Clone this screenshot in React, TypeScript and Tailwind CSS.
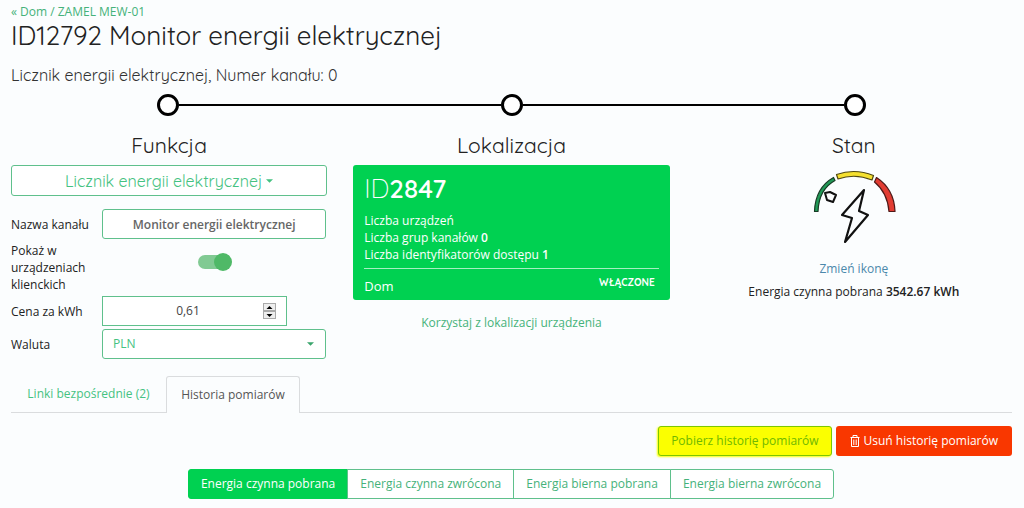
import React, { useState } from 'react';

const CHARTS = [
  'Energia czynna pobrana',
  'Energia czynna zwrócona',
  'Energia bierna pobrana',
  'Energia bierna zwrócona',
];

const Caret = ({ className = '' }: { className?: string }) => (
  <svg viewBox="0 0 8 4" className={`w-[7px] h-1 fill-current ${className}`} aria-hidden="true">
    <path d="M0 0h8L4 4z" />
  </svg>
);

const StepDot = () => <span className="size-[22px] rounded-full border-3 border-black bg-white" />;

const Timeline = () => (
  <div className="mx-[14.6%] mt-2 flex items-center">
    <StepDot />
    <span className="h-[2px] flex-1 bg-black" />
    <StepDot />
    <span className="h-[2px] flex-1 bg-black" />
    <StepDot />
  </div>
);

const ColumnTitle = ({ children }: { children: React.ReactNode }) => (
  <h2 className="mb-1 text-center font-['Quicksand','Lato',sans-serif] text-[21px] leading-8 text-[#222]">
    {children}
  </h2>
);

const Spinner = ({ onStep }: { onStep: (delta: number) => void }) => (
  <div className="flex w-[13px] flex-col">
    <button
      type="button"
      aria-label="Zwiększ"
      onClick={() => onStep(1)}
      className="flex h-2 items-center justify-center border border-[#aaa] bg-[#eee] text-black"
    >
      <Caret className="w-[5px] h-[3px] rotate-180" />
    </button>
    <button
      type="button"
      aria-label="Zmniejsz"
      onClick={() => onStep(-1)}
      className="flex h-2 items-center justify-center border border-[#aaa] bg-[#eee] text-black"
    >
      <Caret className="w-[5px] h-[3px]" />
    </button>
  </div>
);

const FunctionColumn = () => {
  const [price, setPrice] = useState('0,61');

  const stepPrice = (delta: number) => {
    const value = parseFloat(price.replace(',', '.')) || 0;
    setPrice((value + delta * 0.01).toFixed(2).replace('.', ','));
  };

  return (
    <section>
      <ColumnTitle>Funkcja</ColumnTitle>
      <button
        type="button"
        className="flex h-[31px] w-full items-center justify-center gap-1 rounded-[3px] border border-[#5fc08c] bg-white font-['Quicksand','Lato',sans-serif] text-base text-[#45c281]"
      >
        Licznik energii elektrycznej
        <Caret />
      </button>

      <div className="mt-[13px] grid grid-cols-[91px_1fr] items-center text-xs leading-[17px] text-[#222]">
        <label htmlFor="caption">Nazwa kanału</label>
        <input
          id="caption"
          defaultValue="Monitor energii elektrycznej"
          className="mr-px h-[30px] min-w-0 rounded-[3px] border border-[#5fc08c] bg-white text-center font-semibold text-[#666]"
        />

        <label htmlFor="visible" className="mt-[3px] w-20">
          Pokaż w urządzeniach klienckich
        </label>
        <label htmlFor="visible" className="relative mx-auto mt-[14px] flex h-[18px] w-[34px] items-center self-start">
          <input id="visible" type="checkbox" defaultChecked className="peer sr-only" />
          <span className="h-[14px] w-8 rounded-full bg-[#bbb] peer-checked:bg-[#81ca93]" />
          <span className="absolute left-0 size-[18px] rounded-full bg-[#eee] peer-checked:left-auto peer-checked:right-0 peer-checked:bg-[#4fb967]" />
        </label>

        <label htmlFor="price" className="mt-[3px]">
          Cena za kWh
        </label>
        <div className="mt-[3px] flex h-[30px] w-[185px] items-center border border-[#5fc08c] bg-white px-2.5">
          <input
            id="price"
            inputMode="decimal"
            value={price}
            onChange={(e) => setPrice(e.target.value)}
            className="min-w-0 flex-1 text-center text-xs text-[#444] outline-none"
          />
          <Spinner onStep={stepPrice} />
        </div>

        <label htmlFor="currency" className="mt-[3px]">
          Waluta
        </label>
        <div className="relative mt-[3px] mr-px">
          <select
            id="currency"
            className="h-[30px] w-full appearance-none rounded-[3px] border border-[#5fc08c] bg-white px-2.5 text-xs text-[#45c281]"
          >
            <option>PLN</option>
            <option>EUR</option>
          </select>
          <Caret className="pointer-events-none absolute top-[13px] right-3 text-[#3aa56c]" />
        </div>
      </div>
    </section>
  );
};

const LocationColumn = () => (
  <section className="text-center">
    <ColumnTitle>Lokalizacja</ColumnTitle>
    <div className="rounded-[3px] bg-[#00d151] px-[11px] pt-2 text-left text-xs text-white">
      <h3 className="font-['Quicksand','Lato',sans-serif] text-[26px] leading-8 font-light">
        ID<span className="font-semibold">2847</span>
      </h3>
      <div className="mt-[7px] leading-[17px]">
        <p>Liczba urządzeń</p>
        <p>
          Liczba grup kanałów <b className="font-semibold">0</b>
        </p>
        <p>
          Liczba identyfikatorów dostępu <b className="font-semibold">1</b>
        </p>
      </div>
      <div className="mt-[5px] flex h-[32px] items-center justify-between border-t border-[#a6efc2]">
        <span className="pt-1 text-[13px]">Dom</span>
        <span className="pr-1 pb-1 font-['Quicksand','Lato',sans-serif] text-[10px] font-bold">WŁĄCZONE</span>
      </div>
    </div>
    <a href="#location" className="mt-[14px] inline-block text-xs leading-[18px] text-[#45b27a]">
      Korzystaj z lokalizacji urządzenia
    </a>
  </section>
);

const EnergyIcon = () => (
  <svg viewBox="0 0 84 76" className="mx-auto h-[76px] w-[84px]" fill="none" strokeLinejoin="round" aria-hidden="true">
    <path d="M2.5 42.5C3 27 10 15 21.5 8.5L23 11.5C13 17 6.5 28 6 42.5z" fill="#219a57" stroke="#173b25" strokeWidth="1.2" />
    <path d="M24.5 5.5Q43-1 61.5 6.500L60 11Q43 4 26 10z" fill="#f5e02f" stroke="#4f4812" strokeWidth="1.2" />
    <path d="M64.5 8.5C76 16 82.5 28 83 42.5H77C76 30 71 20 62.5 13z" fill="#e23c32" stroke="#4e1917" strokeWidth="1.2" />
    <path d="M13 24l5-1 6 3-3 7-6-2z" stroke="#111" strokeWidth="2" />
    <path d="M52 21L30 46l10 3-7 24 23-27-9-4z" stroke="#111" strokeWidth="2.2" />
  </svg>
);

const StateColumn = () => (
  <section className="text-center">
    <ColumnTitle>Stan</ColumnTitle>
    <div className="mt-2">
      <EnergyIcon />
    </div>
    <a href="#icon" className="mt-[15px] inline-block text-xs leading-[18px] text-[#4b88ab]">
      Zmień ikonę
    </a>
    <p className="mt-1 text-xs leading-[18px] text-[#222]">
      Energia czynna pobrana <b className="font-semibold">3542.67 kWh</b>
    </p>
  </section>
);

const TrashIcon = () => (
  <svg viewBox="0 0 10 12" className="h-3 w-[10px]" fill="none" stroke="currentColor" aria-hidden="true">
    <path d="M0.500 2.500h9M3 2V.5h4V2M1.500 3v8.500h7V3M3.800 4.500V10M6.200 4.500V10" />
  </svg>
);

export default function App() {
  const [chart, setChart] = useState(CHARTS[0]);

  return (
    <main className="min-h-screen bg-[#fbfdfe] pt-1 pr-3 pb-2 pl-[11px] font-['Open_Sans','Noto_Sans',sans-serif]">
      <header>
        <nav className="text-xs leading-4 text-[#45b27a]">
          <a href="#home">« Dom</a> / <a href="#device">ZAMEL MEW-01</a>
        </nav>
        <h1 className="font-['Quicksand','Lato',sans-serif] text-[26px] leading-8 text-[#222]">
          ID12792 Monitor energii elektrycznej
        </h1>
        <p className="mt-3 font-['Quicksand','Lato',sans-serif] text-base leading-[22px] text-[#333]">
          Licznik energii elektrycznej, Numer kanału: 0
        </p>
      </header>

      <Timeline />

      <div className="mt-[13px] grid grid-cols-3 gap-[26px]">
        <FunctionColumn />
        <LocationColumn />
        <StateColumn />
      </div>

      <div role="tablist" className="mt-[17px] flex border-b border-[#dadcde] text-xs">
        <button type="button" role="tab" aria-selected="false" className="h-9 w-[155px] text-[#45c281]">
          Linki bezpośrednie (2)
        </button>
        <button
          type="button"
          role="tab"
          aria-selected="true"
          className="-mb-px h-[37px] w-[134px] rounded-t-[3px] border border-b-0 border-[#dadcde] bg-[#fbfdfe] text-[#555]"
        >
          Historia pomiarów
        </button>
      </div>

      <div className="mt-[13px] flex justify-end gap-1 text-xs">
        <button
          type="button"
          className="h-[30px] rounded-[3px] border border-[#7cc800] bg-[#fbff00] px-3 text-[#6fb800] shadow-[-1px_1px_2px_#fbff00]"
        >
          Pobierz historię pomiarów
        </button>
        <button
          type="button"
          className="flex h-[30px] items-center gap-1 rounded-[3px] bg-[#f93700] px-[14px] text-white"
        >
          <TrashIcon />
          Usuń historię pomiarów
        </button>
      </div>

      <div className="mt-[13px] flex justify-center text-xs">
        {CHARTS.map((name) => (
          <button
            key={name}
            type="button"
            onClick={() => setChart(name)}
            className={`-ml-px h-[30px] border px-3 first:rounded-l-[3px] last:rounded-r-[3px] ${
              name === chart ? 'border-[#00d151] bg-[#00d151] text-white' : 'border-[#5fc08c] bg-white text-[#45b27a]'
            }`}
          >
            {name}
          </button>
        ))}
      </div>
    </main>
  );
}
